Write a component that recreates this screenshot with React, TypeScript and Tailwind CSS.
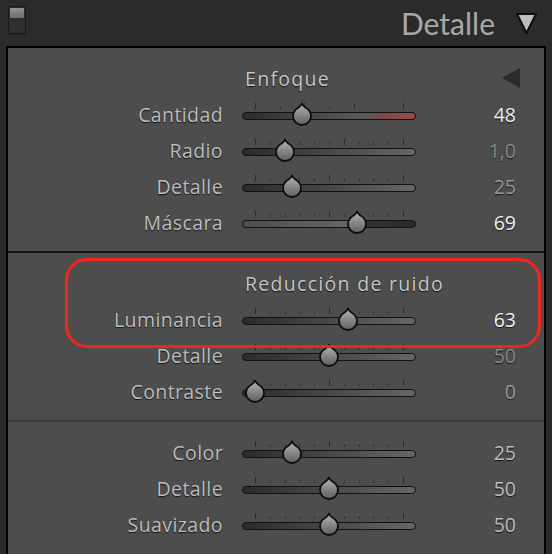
import React from "react";

type Row = {
  label: string;
  value: string;
  pos: number; // 0..1
  valueColor: string;
  ticks: { f: number; tall: boolean }[];
  track: string;
};

const std11 = (talls: number[]) =>
  Array.from({ length: 11 }, (_, i) => ({ f: i / 10, tall: talls.includes(i) }));

const cantidadTicks = [
  { f: 0, tall: true },
  { f: 1 / 6, tall: false },
  { f: 2 / 6, tall: true },
  { f: 3 / 6, tall: false },
  { f: 4 / 6, tall: true },
  { f: 1, tall: true },
];

const defTrack = "linear-gradient(to right, #2b2b2b, #454545 45%, #666666)";

const sec1: Row[] = [
  {
    label: "Cantidad",
    value: "48",
    pos: 48 / 150,
    valueColor: "#f2f2f2",
    ticks: cantidadTicks,
    track: "linear-gradient(to right, #2b2b2b, #474747 40%, #5c5c5c 72%, #7a4848 80%, #9c4a4a)",
  },
  { label: "Radio", value: "1,0", pos: 0.2, valueColor: "#8c8c8c", ticks: std11([0, 2, 6, 10]), track: defTrack },
  { label: "Detalle", value: "25", pos: 0.25, valueColor: "#999999", ticks: std11([0, 5, 10]), track: defTrack },
  {
    label: "Máscara",
    value: "69",
    pos: 0.69,
    valueColor: "#f0f0f0",
    ticks: std11([0, 5, 10]),
    track: "linear-gradient(to right, #4e4e4e, #676767 66%, #323232 70%, #2b2b2b)",
  },
];

const sec2: Row[] = [
  { label: "Luminancia", value: "63", pos: 0.63, valueColor: "#f4f4f4", ticks: std11([0, 5, 10]), track: defTrack },
  { label: "Detalle", value: "50", pos: 0.5, valueColor: "#8a8a8a", ticks: std11([0, 5, 10]), track: defTrack },
  { label: "Contraste", value: "0", pos: 0, valueColor: "#9c9c9c", ticks: std11([0, 5, 10]), track: defTrack },
];

const sec3: Row[] = [
  { label: "Color", value: "25", pos: 0.25, valueColor: "#bfbfbf", ticks: std11([0, 5, 10]), track: defTrack },
  { label: "Detalle", value: "50", pos: 0.5, valueColor: "#bfbfbf", ticks: std11([0, 5, 10]), track: defTrack },
  { label: "Suavizado", value: "50", pos: 0.5, valueColor: "#bfbfbf", ticks: std11([0, 5, 10]), track: defTrack },
];

const SMALL = "font-['Open_Sans','Noto_Sans',sans-serif] text-[19.5px] leading-none [text-shadow:0_1px_1px_rgba(0,0,0,0.75)]";

function Thumb({ x }: { x: number }) {
  return (
    <svg
      width="22"
      height="25"
      viewBox="0 0 22 25"
      className="absolute top-[5px]"
      style={{ left: x - 11 }}
    >
      <defs>
        <linearGradient id="thumbg" x1="0" y1="0" x2="0" y2="1">
          <stop offset="0" stopColor="#b4b4b4" />
          <stop offset="0.45" stopColor="#8e8e8e" />
          <stop offset="1" stopColor="#5e5e5e" />
        </linearGradient>
      </defs>
      <path
        d="M11 1.5 C11.8 4 14.5 5.6 17.36 7.64 A9 9 0 1 1 4.64 7.64 C7.5 5.6 10.2 4 11 1.5 Z"
        fill="url(#thumbg)"
        stroke="#0d0d0d"
        strokeWidth="1.8"
        strokeLinejoin="round"
      />
    </svg>
  );
}

function Slider({ row }: { row: Row }) {
  const start = 13;
  const span = 148;
  return (
    <div className="relative w-[174px] h-[36px] shrink-0">
      {row.ticks.map((t, i) => (
        <div
          key={i}
          className={
            t.tall
              ? "absolute top-[6px] h-[6px] w-px bg-[#2a2a2a]"
              : "absolute top-[9px] h-[3px] w-px bg-[#333333]"
          }
          style={{ left: start + t.f * span }}
        />
      ))}
      <div
        className="absolute left-0 top-[15px] h-[8px] w-[174px] rounded-full border border-[#111111]"
        style={{ background: row.track }}
      />
      <Thumb x={start + row.pos * span} />
    </div>
  );
}

function SliderRow({ row }: { row: Row }) {
  return (
    <div className="flex h-[36px] items-center">
      <div className={`w-[215px] shrink-0 text-right tracking-[0.4px] text-[#bdbdbd] ${SMALL}`}>{row.label}</div>
      <div className="w-[19px] shrink-0" />
      <Slider row={row} />
      <div className={`w-[100px] shrink-0 text-right ${SMALL}`} style={{ color: row.valueColor }}>
        {row.value}
      </div>
    </div>
  );
}

function Header({ title, arrow }: { title: string; arrow?: boolean }) {
  return (
    <div className="flex h-[36px] items-center">
      <div className="w-[237px] shrink-0" />
      <div className={`w-[257px] tracking-[1.3px] text-[#c6c6c6] ${SMALL}`}>{title}</div>
      {arrow && (
        <svg width="18" height="20" viewBox="0 0 18 20" className="shrink-0 -mt-[2px]">
          <path d="M18 0 L18 20 L0 10 Z" fill="#2b2b2b" />
        </svg>
      )}
    </div>
  );
}

export default function App() {
  return (
    <div className="relative flex h-[554px] w-[552px] flex-col overflow-hidden bg-[#2b2b2b] font-['Lato','Open_Sans',sans-serif]">
      {/* top bar */}
      <div className="flex h-[46px] shrink-0 items-start">
        <div className="ml-[8px] mt-[6px] flex h-[28px] w-[18px] flex-col rounded-[1px] border border-[#1a1a1a] bg-[#2d2d2d] p-px shadow-[0_1px_0_#222]">
          <div className="h-[10px] w-full bg-gradient-to-b from-[#939393] to-[#6c6c6c]" />
          <div className="flex-1 bg-[#2f2f2f]" />
        </div>
        <div className="flex-1" />
        <div className="mt-[5px] text-[30px] leading-[36px] text-[#a8a8a8]">Detalle</div>
        <svg width="23" height="23" viewBox="0 0 23 23" className="ml-[20px] mr-[14px] mt-[12px] shrink-0">
          <path d="M2 2 L21 2 L11.5 21 Z" fill="#bdbdbd" stroke="#0d0d0d" strokeWidth="2" strokeLinejoin="round" />
        </svg>
      </div>

      {/* panel */}
      <div className="mx-[6px] flex flex-1 flex-col border-2 border-b-0 border-black bg-[#4d4d4d]">
        <div className="pt-[13px] pb-[10px]">
          <Header title="Enfoque" arrow />
          {sec1.map((r) => (
            <SliderRow key={r.label} row={r} />
          ))}
        </div>
        <div className="h-[2px] bg-[#151515]" />
        <div className="pt-[13px] pb-[10px]">
          <Header title="Reducción de ruido" />
          {sec2.map((r) => (
            <SliderRow key={r.label} row={r} />
          ))}
        </div>
        <div className="h-[2px] bg-[#3b3b3b]" />
        <div className="pt-[13px]">
          {sec3.map((r) => (
            <SliderRow key={r.label} row={r} />
          ))}
        </div>
      </div>

      {/* red highlight */}
      <div className="pointer-events-none absolute left-[65px] top-[258px] h-[90px] w-[476px] rounded-[22px] border-[3px] border-[#f0261c]" />
    </div>
  );
}
